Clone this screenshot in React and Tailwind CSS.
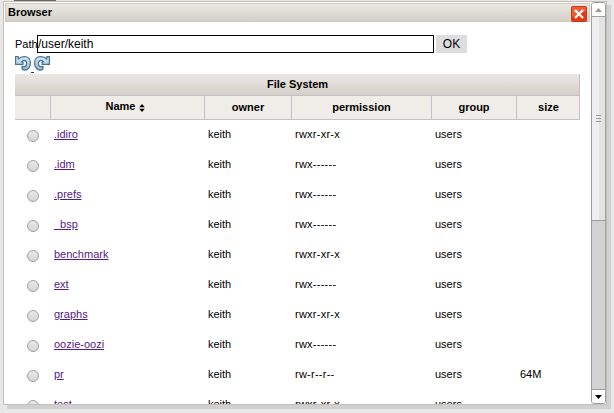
const rows = [
  ['.idiro', 'rwxr-xr-x', ''],
  ['.idm', 'rwx------', ''],
  ['.prefs', 'rwx------', ''],
  ['_bsp', 'rwx------', ''],
  ['benchmark', 'rwxr-xr-x', ''],
  ['ext', 'rwx------', ''],
  ['graphs', 'rwxr-xr-x', ''],
  ['oozie-oozi', 'rwx------', ''],
  ['pr', 'rw-r--r--', '64M'],
  ['test', 'rwxr-xr-x', ''],
];

const grid = 'grid grid-cols-[36px_154px_87px_140px_85px_63px]';
const headCell = 'flex items-center justify-center border-r border-[#c4c0c9]';

function TurnArrow({ flip }) {
  return (
    <svg width="16" height="15" viewBox="0 0 16 15" className={flip ? 'shrink-0 -scale-x-100' : 'shrink-0'}>
      <defs>
        <linearGradient id="steel" x1="0" y1="0" x2="0" y2="1">
          <stop offset="0" stopColor="#d9ebf7" />
          <stop offset="1" stopColor="#8fbbd9" />
        </linearGradient>
      </defs>
      <path
        d="M.6.700H3.200V3C5 1.200 7.200.600 9.500.600c3.600 0 5.900 2.800 5.900 6.300 0 4.300-2.500 7.200-5.700 7.200-1.700 0-2.700-.600-2.700-2V10.200c.900.500 1.700.600 2.500.400 1.400-.300 2.100-1.500 2.100-3.100 0-1.900-1-3.200-2.500-3.200-1.100 0-1.900.600-2.500 1.500h1.400V8.400H.6Z"
        fill="url(#steel)"
        stroke="#46718f"
        strokeWidth="1.200"
        strokeLinejoin="round"
      />
    </svg>
  );
}

function TitleBar() {
  return (
    <div className="flex h-[19px] w-[585px] items-center justify-between border border-[#d0cdbf] bg-linear-to-b from-[#ebe8e4] to-[#d4cfc7] pr-[2px] pl-[2px]">
      <span className="text-[11px] leading-[13px] font-bold">Browser</span>
      <svg width="16" height="16" viewBox="0 0 16 16" className="relative top-px">
        <rect x=".5" y=".5" width="15" height="15" rx="1" fill="#e63b12" stroke="#c0391c" />
        <path d="M1 1h14v4L1 11Z" fill="#f4704a" opacity=".65" />
        <path d="m4 4 8 8m0-8-8 8" stroke="#fff" strokeWidth="2.300" />
      </svg>
    </div>
  );
}

function ScrollBar() {
  return (
    <div className="-mt-px flex h-[402px] w-[15px] shrink-0 flex-col overflow-hidden rounded-[3px] border border-[#a09f9d] bg-[#d2d2d2]">
      <div className="flex h-[14px] shrink-0 items-center justify-center border-b border-[#a09f9d] bg-white">
        <svg width="7" height="4" viewBox="0 0 7 4"><path d="M3.500 0 7 4H0Z" fill="#999" /></svg>
      </div>
      <div className="flex h-[204px] shrink-0 flex-col items-center gap-[2px] border-b border-[#a09f9d] bg-linear-to-r from-[#efefef] from-50% to-[#e3e3e3] to-50% pt-[98px]">
        <div className="h-px w-[5px] shrink-0 bg-[#999]" />
        <div className="h-px w-[5px] shrink-0 bg-[#999]" />
        <div className="h-px w-[5px] shrink-0 bg-[#999]" />
      </div>
      <div className="flex-1" />
      <div className="flex h-[14px] shrink-0 items-center justify-center border-t border-[#a09f9d] bg-white">
        <svg width="7" height="4" viewBox="0 0 7 4"><path d="M0 0h7L3.500 4Z" fill="#000" /></svg>
      </div>
    </div>
  );
}

function FileTable() {
  return (
    <div className="w-[565px]">
      <div className="flex h-[21px] items-center justify-center border-r border-[#c4c0c9] bg-linear-to-b from-[#ebe8e4] to-[#d4cfc7] pl-px font-bold">
        File System
      </div>
      <div className={`${grid} h-[25px] border-y border-[#c4c0c9] bg-[#f0ede8] font-bold`}>
        <div className={headCell} />
        <div className={`${headCell} gap-[4px] pr-[4px] pb-[2px]`}>
          Name
          <svg width="6" height="8" viewBox="0 0 6 8" className="mt-[2px]">
            <path d="M3 0 5.800 3.200H.2ZM.2 4.800h5.600L3 8Z" fill="#000" />
          </svg>
        </div>
        <div className={headCell}>owner</div>
        <div className={headCell}>permission</div>
        <div className={headCell}>group</div>
        <div className={`${headCell} pl-px`}>size</div>
      </div>
      {rows.map(([name, permission, size]) => (
        <div key={name} className={`${grid} h-[30px] pt-[8px]`}>
          <div className="pt-[2px] pl-[12px]">
            <div className="size-[12px] rounded-full border border-[#a0a0a0] bg-linear-to-b from-[#e8e8e8] to-[#d6d6d6]" />
          </div>
          <div className="pl-[3px]">
            <a href="#" className="text-[#551a8b] underline">{name}</a>
          </div>
          <div className="pl-[3px]">keith</div>
          <div className="pl-[3px] tracking-[0.25px]">{permission}</div>
          <div className="pl-[3px]">users</div>
          <div className="pl-[3px]">{size}</div>
        </div>
      ))}
    </div>
  );
}

export default function App() {
  return (
    <div className="h-[413px] w-[614px] overflow-hidden bg-[#e8e8e8] font-['Liberation_Sans',Arial,sans-serif] text-[11px] leading-[13px] text-black">
      <div className="ml-[14px] h-px w-[42px] bg-[#666]" />
      <div className="ml-[3px] flex h-[404px] w-[604px] overflow-hidden border border-[#c4c0b9] bg-white pt-px pl-px shadow-[4px_4px_0_#d0d0d0]">
        <div className="w-[586px] shrink-0">
          <TitleBar />
          <div className="pt-[13px] pl-[10px]">
            <div className="flex h-[18px] items-center">
              <span className="w-[22px]">Path</span>
              <div className="flex h-[18px] w-[397px] items-center border border-black text-[12px]">/user/keith</div>
              <button className="ml-[2px] h-[18px] w-[31px] bg-[#ddd] text-[12px]">OK</button>
            </div>
            <div className="flex h-[21px] pt-[3px]">
              <TurnArrow />
              <div className="mt-[16px] h-px w-[3px] bg-[#551a8b]" />
              <TurnArrow flip />
            </div>
            <FileTable />
          </div>
        </div>
        <ScrollBar />
      </div>
    </div>
  );
}
